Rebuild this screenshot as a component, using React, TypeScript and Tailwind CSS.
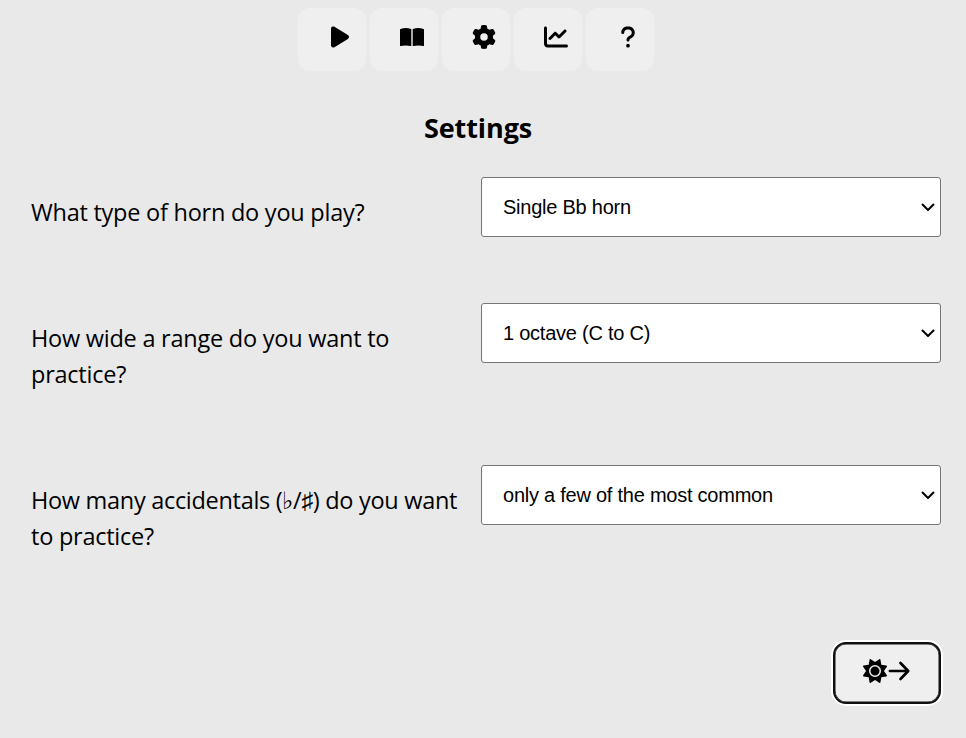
import { FaPlay, FaGear, FaChartLine, FaQuestion, FaSun } from "react-icons/fa6";
import type { ReactNode } from "react";

function BookIcon() {
  return (
    <svg viewBox="0 0 24 18" className="h-[18px] w-6" fill="currentColor">
      <path d="M0 1.3Q5.5-.9 11 1V18Q5.5 16.8 0 18Z" />
      <path d="M13 1Q18.5-.9 24 1.3V18Q18.5 16.8 13 18Z" />
      <path d="M11 1H13V18H11Z" fillOpacity=".3" />
    </svg>
  );
}

function ArrowIcon() {
  return (
    <svg viewBox="0 0 24 24" className="size-6" fill="none" stroke="currentColor" strokeWidth="2.7" strokeLinecap="round" strokeLinejoin="round">
      <path d="M2.9 12H21M13.5 4L21.2 12L13.5 20" />
    </svg>
  );
}

function Tab({ label, children }: { label: string; children: ReactNode }) {
  return (
    <button aria-label={label} className="flex h-[63px] w-[68px] items-center justify-center rounded-xl bg-[#efefef] pb-[5px] pl-4">
      {children}
    </button>
  );
}

function Field({ label, value, height }: { label: ReactNode; value: string; height: string }) {
  return (
    <div className={`flex items-start ${height}`}>
      <div className="w-[450px] shrink-0 pt-[17px] text-[23.5px] leading-9 tracking-[-0.24px]">{label}</div>
      <div className="flex h-[60px] w-[460px] items-center justify-between rounded-[3px] border border-[#767676] bg-white pr-[5px] pl-[21px] font-['Liberation_Sans',Arial,sans-serif] text-xl tracking-[-0.24px]">
        <span>{value}</span>
        <svg viewBox="0 0 14 8" className="h-2 w-3.5" fill="none" stroke="currentColor" strokeWidth="2">
          <path d="M1 1L7 7L13 1" />
        </svg>
      </div>
    </div>
  );
}

export default function App() {
  return (
    <main className="h-[738px] w-[966px] bg-[#e9e9e9] pt-2 font-['Open_Sans','Noto_Sans',sans-serif] text-black">
      <nav className="ml-[298px] flex gap-1">
        <Tab label="Play"><FaPlay className="size-6" /></Tab>
        <Tab label="Learn"><BookIcon /></Tab>
        <Tab label="Settings"><FaGear className="size-6" /></Tab>
        <Tab label="Statistics"><FaChartLine className="size-6" /></Tab>
        <Tab label="Help"><FaQuestion className="size-6" /></Tab>
      </nav>
      <h1 className="mt-[37px] ml-[424px] text-[27px] leading-10 font-bold tracking-[-0.1px]">Settings</h1>
      <section className="mt-[29px] ml-[31px]">
        <Field height="h-[126px]" label="What type of horn do you play?" value="Single Bb horn" />
        <Field height="h-[162px]" label={<>How wide a range do you want to<br />practice?</>} value="1 octave (C to C)" />
        <Field height="h-[162px]" label={<><span className="tracking-[-0.3px]">How many accidentals (♭/♯) do you want</span><br />to practice?</>} value="only a few of the most common" />
      </section>
      <button aria-label="Save and continue" className="mt-[15px] ml-[833px] flex h-[62px] w-[108px] items-center justify-center rounded-[13px] border-2 border-[#101010] bg-[#efefef] pb-1 ring-2 ring-white inset-ring-[0.5px] inset-ring-[#101010]">
        <FaSun className="size-6" />
        <ArrowIcon />
      </button>
    </main>
  );
}
